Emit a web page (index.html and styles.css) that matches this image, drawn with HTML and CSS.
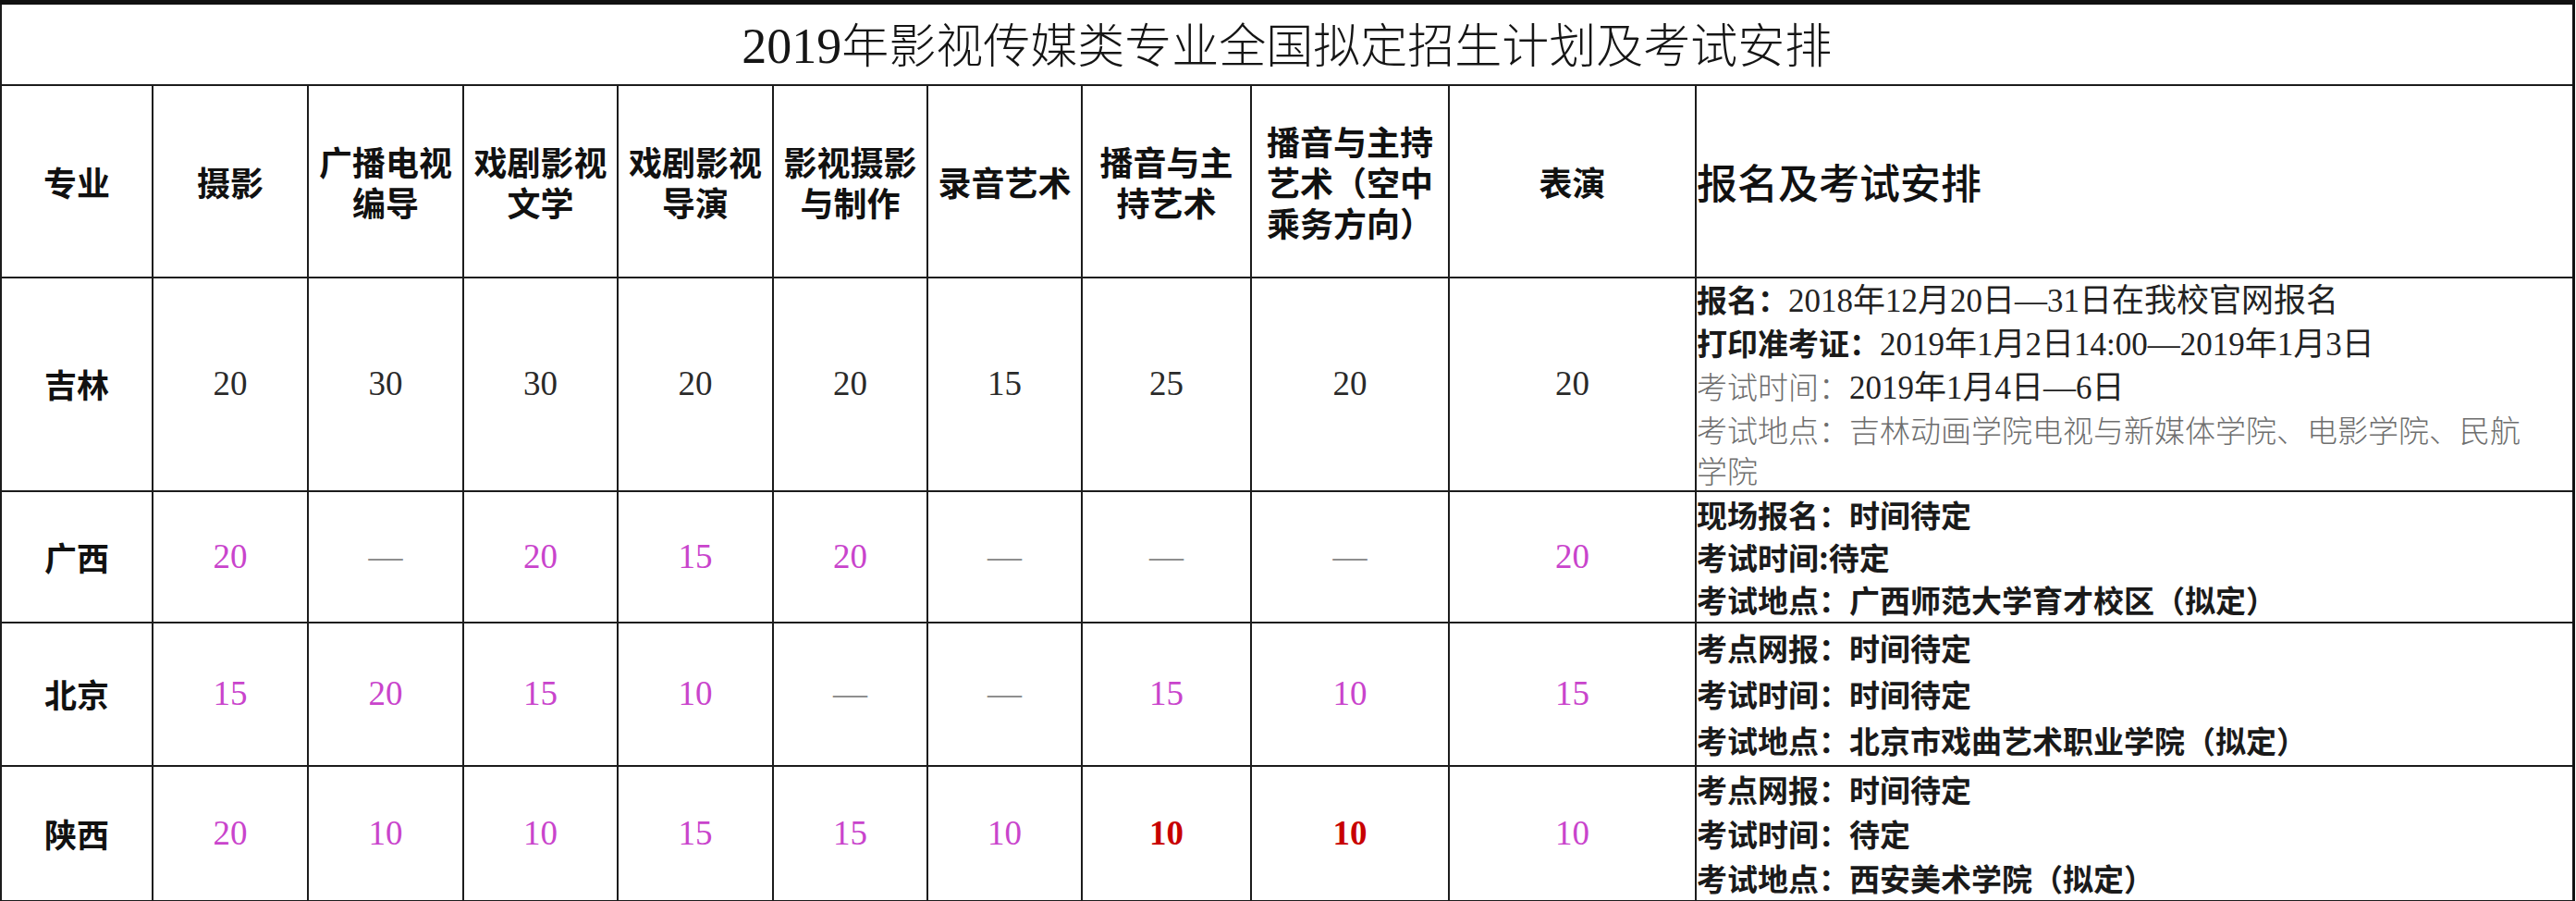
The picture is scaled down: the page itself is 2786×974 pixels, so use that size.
FILE: index.html
```html
<!DOCTYPE html>
<html lang="zh-CN">
<head>
<meta charset="utf-8">
<title>2019年影视传媒类专业全国拟定招生计划及考试安排</title>
<link rel="stylesheet" href="styles.css">
</head>
<body>
<table class="plan">
  <colgroup>
    <col class="c-major">
    <col class="c-std">
    <col class="c-std">
    <col class="c-std2">
    <col class="c-std">
    <col class="c-std2">
    <col class="c-std2">
    <col class="c-bo">
    <col class="c-kz">
    <col class="c-by">
    <col class="c-info">
  </colgroup>
  <tr class="r-title">
    <th colspan="11" class="title"><span class="ser">2019</span>年影视传媒类专业全国拟定招生计划及考试安排</th>
  </tr>
  <tr class="r-head">
    <th class="hd">专业</th>
    <th class="hd">摄影</th>
    <th class="hd">广播电视<br>编导</th>
    <th class="hd">戏剧影视<br>文学</th>
    <th class="hd">戏剧影视<br>导演</th>
    <th class="hd">影视摄影<br>与制作</th>
    <th class="hd">录音艺术</th>
    <th class="hd">播音与主<br>持艺术</th>
    <th class="hd">播音与主持<br>艺术（空中<br>乘务方向）</th>
    <th class="hd">表演</th>
    <th class="hd hd-info">报名及考试安排</th>
  </tr>
  <tr class="r-jl">
    <th class="prov">吉林</th>
    <td class="num">20</td>
    <td class="num">30</td>
    <td class="num">30</td>
    <td class="num">20</td>
    <td class="num">20</td>
    <td class="num">15</td>
    <td class="num">25</td>
    <td class="num">20</td>
    <td class="num">20</td>
    <td class="info info-jl">
      <div><b>报名：</b><span class="ser">2018年12月20日—31日在我校官网报名</span></div>
      <div><b>打印准考证：</b><span class="ser">2019年1月2日14:00—2019年1月3日</span></div>
      <div><span class="gray">考试时间：</span><span class="ser">2019年1月4日—6日</span></div>
      <div class="gray">考试地点：吉林动画学院电视与新媒体学院、电影学院、民航<br>学院</div>
    </td>
  </tr>
  <tr class="r-gx">
    <th class="prov">广西</th>
    <td class="num pink">20</td>
    <td class="num dash">—</td>
    <td class="num pink">20</td>
    <td class="num pink">15</td>
    <td class="num pink">20</td>
    <td class="num dash">—</td>
    <td class="num dash">—</td>
    <td class="num dash">—</td>
    <td class="num pink">20</td>
    <td class="info info-b">
      <div>现场报名：时间待定</div>
      <div>考试时间:待定</div>
      <div>考试地点：广西师范大学育才校区（拟定）</div>
    </td>
  </tr>
  <tr class="r-bj">
    <th class="prov">北京</th>
    <td class="num pink">15</td>
    <td class="num pink">20</td>
    <td class="num pink">15</td>
    <td class="num pink">10</td>
    <td class="num dash">—</td>
    <td class="num dash">—</td>
    <td class="num pink">15</td>
    <td class="num pink">10</td>
    <td class="num pink">15</td>
    <td class="info info-b info-bj">
      <div>考点网报：时间待定</div>
      <div>考试时间：时间待定</div>
      <div>考试地点：北京市戏曲艺术职业学院（拟定）</div>
    </td>
  </tr>
  <tr class="r-sx">
    <th class="prov">陕西</th>
    <td class="num pink">20</td>
    <td class="num pink">10</td>
    <td class="num pink">10</td>
    <td class="num pink">15</td>
    <td class="num pink">15</td>
    <td class="num pink">10</td>
    <td class="num red">10</td>
    <td class="num red">10</td>
    <td class="num pink">10</td>
    <td class="info info-b info-sx">
      <div>考点网报：时间待定</div>
      <div>考试时间：待定</div>
      <div>考试地点：西安美术学院（拟定）</div>
    </td>
  </tr>
</table>
</body>
</html>
```
FILE: styles.css
```css
html, body {
  margin: 0;
  padding: 0;
  background: #ffffff;
}

body {
  font-family: "Noto Sans CJK SC", sans-serif;
  color: #111111;
}

.plan {
  border-collapse: collapse;
  table-layout: fixed;
  width: 2784px;
  border-top: 5px solid #111111;
  border-right: 3px solid #111111;
  border-left: 2px solid #8a8a8a;
}

.c-major { width: 164px; }
.c-std { width: 168px; }
.c-std2 { width: 167px; }
.c-bo { width: 183px; }
.c-kz { width: 214px; }
.c-by { width: 267px; }
.c-info { width: 949px; }

.plan th,
.plan td {
  border: 2px solid #1c1c1c;
  padding: 0;
}

.r-title { height: 89px; }
.r-head { height: 208px; }
.r-jl { height: 226px; }
.r-gx { height: 142px; }
.r-bj { height: 155px; }
.r-sx { height: 146px; }

.title {
  font-family: "Noto Sans CJK SC", sans-serif;
  font-weight: 300;
  font-size: 51px;
  line-height: 56px;
  color: #151515;
  text-align: center;
  vertical-align: middle;
  border-left: none;
}

.ser {
  font-family: "Liberation Serif", "Noto Sans CJK SC", serif;
}

.title .ser {
  font-size: 54px;
}

.hd {
  font-weight: 700;
  font-size: 36px;
  line-height: 44px;
  text-align: center;
  vertical-align: middle;
  white-space: nowrap;
  color: #111111;
  border-left-width: 3px;
  border-right-width: 3px;
  border-left-color: #0c0c0c;
  border-right-color: #0c0c0c;
}

.hd-info {
  font-weight: 500;
  font-size: 44px;
  text-align: left;
  padding-left: 6px;
  border-left-width: 2px;
}

.prov {
  font-weight: 700;
  font-size: 35px;
  line-height: 44px;
  text-align: center;
  vertical-align: middle;
  color: #111111;
}

.num {
  font-family: "Liberation Serif", serif;
  font-size: 37px;
  line-height: 44px;
  text-align: center;
  vertical-align: middle;
  color: #2a2a2a;
}

.pink { color: #c944cc; }

.red {
  color: #c80000;
  font-weight: 700;
}

.dash { color: #8f8f8f; }

.info {
  font-size: 33px;
  line-height: 44px;
  text-align: left;
  vertical-align: middle;
  padding-left: 6px;
  color: #1a1a1a;
}

.info b {
  font-weight: 700;
}

.info .gray,
.info.gray {
  color: #6e6e6e;
  font-weight: 300;
}

.info-jl .ser {
  font-size: 35px;
  color: #222222;
}

.info-jl div.gray {
  color: #6e6e6e;
}

.info-b {
  font-weight: 700;
  line-height: 46px;
}

.info-bj {
  line-height: 50px;
}

.info-sx {
  line-height: 48px;
}
```
